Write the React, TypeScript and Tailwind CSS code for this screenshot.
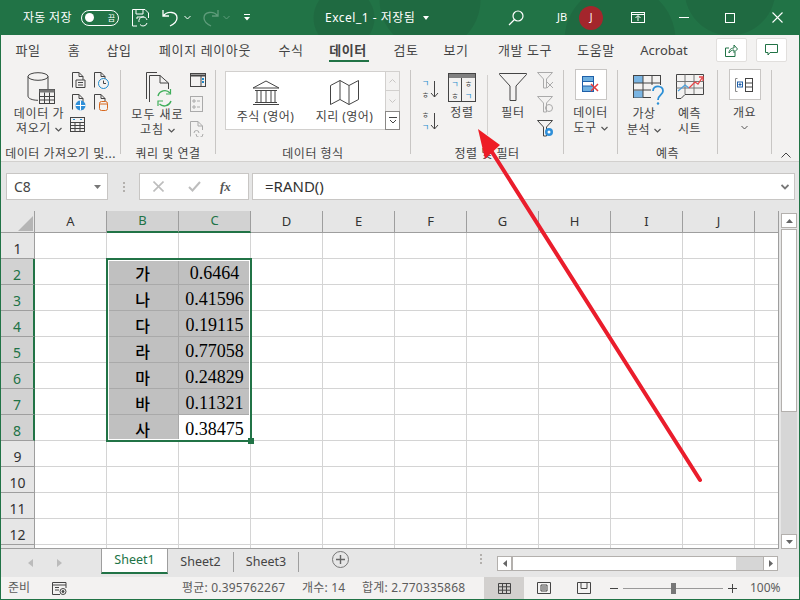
import React from "react";

const D = "#444444";
const BLUE = "#1e8bcd";

function Chevron({ c = "#555" }: { c?: string }) {
  return (
    <svg width="7" height="5" viewBox="0 0 7 5" className="inline-block ml-1 align-middle">
      <path d="M.5 1 3.5 4 6.5 1" fill="none" stroke={c} strokeWidth="1.2" />
    </svg>
  );
}

function Doc({ children, size = 17 }: { children?: React.ReactNode; size?: number }) {
  return (
    <svg width={size} height={size} viewBox="0 0 17 17" fill="none">
      <path d="M1.5 15.5V.5H8L12 4.5V15.5" stroke={D} />
      <path d="M8 .5V4.5H12" stroke={D} />
      {children}
    </svg>
  );
}

function SmallTable() {
  return (
    <svg width="15" height="15" viewBox="0 0 15 15" fill="none" stroke={D}>
      <rect x=".5" y=".5" width="14" height="14" />
      <path d="M.5 5.5H14.5M.5 8.5H14.5M.5 11.5H14.5M5 5.5V14.5M10 5.5V14.5" />
      <path d="M3 2.5H5M10 2.5H12" stroke={BLUE} />
    </svg>
  );
}

function DbIcon() {
  return (
    <svg width="28" height="33" viewBox="0 0 28 33" fill="none">
      <ellipse cx="11" cy="4.5" rx="10" ry="3.8" stroke={D} />
      <path d="M1 4.5V24C1 26.5 5 28.2 11 28.3M21 4.5V17" stroke={D} />
      <rect x="12.5" y="17.5" width="15" height="14" fill="#f3f2f1" stroke={D} />
      <rect x="12.5" y="17.5" width="15" height="3" fill="#777" />
      <path d="M12.5 24.5H27.5M12.5 28H27.5M17.5 20.5V31.5M22.5 20.5V31.5" stroke={D} />
    </svg>
  );
}

function RefreshAll() {
  return (
    <svg width="26" height="36" viewBox="0 0 26 36" fill="none">
      <path d="M.5 27V.5H11" stroke={D} />
      <path d="M3.5 30V3.5H14L22.5 11V17" stroke={D} />
      <path d="M14 3.5V11H22.5" stroke={D} />
      <path d="M12 24A7 7 0 0 1 24 21M25 29A7 7 0 0 1 13.500 32" stroke="#3fae5a" strokeWidth="1.4" />
      <path d="M24.500 17V22H20M12 34V29H17" stroke="#3fae5a" strokeWidth="1.2" />
    </svg>
  );
}

function Bank() {
  return (
    <svg width="28" height="25" viewBox="0 0 28 25" fill="none" stroke={D}>
      <path d="M1 8 14 1 27 8Z" fill="#fff" />
      <path d="M3 10.500H25M3 22.500H25M1 24.500H27" />
      <path d="M5 11V22M9 11V22M14 11V22M19 11V22M23 11V22" />
    </svg>
  );
}

function MapIcon() {
  return (
    <svg width="29" height="25" viewBox="0 0 29 25" fill="none" stroke={D}>
      <path d="M.5 5.500 10 .5 19 5.500 28.500 .5V19.500L19 24.500 10 19.500.5 24.500Z" />
      <path d="M10 .5V19.500M19 5.500V24.500" />
    </svg>
  );
}

function SortAZ({ flip }: { flip?: boolean }) {
  const top = flip ? "ㅎ" : "ㄱ";
  const bot = flip ? "ㄱ" : "ㅎ";
  return (
    <div className="flex items-center h-[24px] w-[19px]">
      <div className="flex flex-col w-[9px] text-[8px] leading-[12px] text-center">
        <span className={flip ? "text-[#444]" : "text-[#1e8bcd]"}>{top}</span>
        <span className={flip ? "text-[#1e8bcd]" : "text-[#444]"}>{bot}</span>
      </div>
      <svg width="9" height="17" viewBox="0 0 9 17" fill="none" stroke={D}>
        <path d="M4.500 0V16M1 12 4.500 16 8 12" />
      </svg>
    </div>
  );
}

function SortBig() {
  return (
    <div className="w-[28px] h-[29px] border border-[#444] flex flex-col">
      <div className="h-[4px] bg-[#808080] shrink-0" />
      <div className="flex flex-1">
        <div className="w-1/2 border-r border-[#444] flex flex-col text-[8px] leading-[11.500px] text-center">
          <span className="text-[#1e8bcd]">ㄱ</span>
          <span>ㅎ</span>
        </div>
        <div className="w-1/2 flex flex-col text-[8px] leading-[11.500px] text-center">
          <span>ㅎ</span>
          <span className="text-[#1e8bcd]">ㄱ</span>
        </div>
      </div>
    </div>
  );
}

function Funnel({ c = D, s = 28 }: { c?: string; s?: number }) {
  return (
    <svg width={s} height={s} viewBox="0 0 28 28" fill="none" stroke={c} strokeWidth={s > 20 ? 1 : 1.4}>
      <path d="M.5 .5H27.500V1.500L17 13V27.500H11V13L.5 1.500Z" />
    </svg>
  );
}

function Forecast() {
  return (
    <svg width="28" height="26" viewBox="0 0 28 26" fill="none">
      <path d="M.5 .5H27.500V20.500H9L5 24.500H.5Z" stroke={D} />
      <path d="M.5 7.500H27.500M.5 14H27.500M9 .5V20M18 .5V20" stroke="#777" />
      <path d="M2 17 9 11 13 14" stroke="#4aa0dc" strokeWidth="1.3" />
      <path d="M13 14 19 8 22 10 26 4M23 3H27V7" stroke="#e8474a" strokeWidth="1.3" />
    </svg>
  );
}

function WhatIf() {
  return (
    <svg width="32" height="30" viewBox="0 0 32 30" fill="none">
      <rect x=".5" y=".5" width="27" height="22" stroke={D} />
      <rect x="1" y="1" width="9" height="7" fill="#7ab5e3" />
      <rect x="1" y="15.500" width="9" height="7" fill="#7ab5e3" />
      <path d="M.5 8H27.500M.5 15H27.500M10 .5V22.500M19 .5V22.500" stroke={D} />
      <rect x="18" y="10" width="14" height="20" fill="#f3f2f1" />
      <path d="M20 16C20 9.500 30 10 30 16 30 20 25 20 25 25" stroke="#2b8fd6" strokeWidth="1.8" />
      <circle cx="25" cy="28.500" r="1.200" fill="#2b8fd6" />
    </svg>
  );
}

function Sep() {
  return <div className="w-px bg-[#c8c6c4] self-stretch my-[7px] shrink-0" />;
}

function Group({ w, label, children }: { w: string; label: string; children: React.ReactNode }) {
  return (
    <div className={`${w} shrink-0 flex flex-col`}>
      <div className="h-[80px] flex overflow-hidden">{children}</div>
      <div className="h-[18px] text-[12px] leading-[18px] pt-[2px] text-center whitespace-nowrap text-[#444] tracking-[0.5px]">{label}</div>
    </div>
  );
}

const COLS = ["A", "B", "C", "D", "E", "F", "G", "H", "I", "J", ""];
const RIGHT: Record<number, [string, string]> = {
  2: ["가", "0.6464"],
  3: ["나", "0.41596"],
  4: ["다", "0.19115"],
  5: ["라", "0.77058"],
  6: ["마", "0.24829"],
  7: ["바", "0.11321"],
  8: ["사", "0.38475"],
};

const TABS: [string, string][] = [
  ["파일", "w-[46px]"],
  ["홈", "w-[46px]"],
  ["삽입", "w-[44px]"],
  ["페이지 레이아웃", "w-[128px]"],
  ["수식", "w-[44px]"],
  ["데이터", "w-[70px]"],
  ["검토", "w-[46px]"],
  ["보기", "w-[54px]"],
  ["개발 도구", "w-[84px]"],
  ["도움말", "w-[58px]"],
  ["Acrobat", "w-[78px]"],
];

export default function App() {
  return (
    <div className="relative w-[800px] h-[600px] overflow-hidden bg-[#e6e6e6] flex flex-col border-x border-b border-[#217346] text-[#444] [font-family:'Noto_Sans','Noto_Sans_CJK_KR',sans-serif]">
      {/* title bar */}
      <div className="h-[35px] shrink-0 bg-[#217346] bg-[radial-gradient(circle_at_344px_18px,#1f6a41_30px,transparent_31px),radial-gradient(circle_at_430px_0px,#1f6a41_50px,transparent_51px),radial-gradient(circle_at_620px_40px,#1f6a41_55px,transparent_56px),radial-gradient(circle_at_730px_-10px,#1f6a41_45px,transparent_46px)] text-white flex items-center text-[12px] -mx-px relative">
        <span className="ml-[23px] w-[53px] whitespace-nowrap tracking-[0.3px]">자동 저장</span>
        <div className="ml-[5px] w-[38px] h-[16px] rounded-full border border-white flex items-center justify-between px-[3px]">
          <span className="w-[9px] h-[9px] rounded-full bg-white" />
          <span className="text-[8px] leading-[11px]">끔</span>
        </div>
        <svg className="ml-[13px]" width="17" height="18" viewBox="0 0 17 18" fill="none" stroke="#fff">
          <path d="M5 17H.5V.5H13L16.500 4V9M4 .5V5H11V.5M5 10V8H12" />
          <path d="M7 13A4 4 0 0 1 15 11M15 14A4 4 0 0 1 8 15.500" />
        </svg>
        <svg className="ml-[13px]" width="18" height="18" viewBox="0 0 18 18" fill="none" stroke="#fff" strokeWidth="1.3">
          <path d="M1 1V7H7M1 7C6 1 15 3 15 9 15 12 12 15 8 17" />
        </svg>
        <svg className="ml-[4px]" width="7" height="5" viewBox="0 0 7 5" fill="none" stroke="#fff"><path d="M.5 1 3.500 4 6.500 1" /></svg>
        <svg className="ml-[10px]" width="18" height="18" viewBox="0 0 18 18" fill="none" stroke="#5f9c7b" strokeWidth="1.3">
          <path d="M17 1V7H11M17 7C12 1 3 3 3 9 3 12 6 15 10 17" />
        </svg>
        <svg className="ml-[4px]" width="7" height="5" viewBox="0 0 7 5" fill="none" stroke="#5f9c7b"><path d="M.5 1 3.500 4 6.500 1" /></svg>
        <svg className="ml-[13px]" width="8" height="7" viewBox="0 0 8 7" fill="#fff"><path d="M1 0H7V1H1ZM1 3H7L4 6.500Z" /></svg>
        <span className="ml-[74px] w-[98px] whitespace-nowrap text-[12px] tracking-[0.5px]">Excel_1 - 저장됨</span>
        <svg width="6" height="4" viewBox="0 0 6 4" fill="#fff"><path d="M0 0H6L3 4Z" /></svg>
        <svg className="ml-[79px]" width="16" height="16" viewBox="0 0 16 16" fill="none" stroke="#fff" strokeWidth="1.2">
          <circle cx="10" cy="6" r="5" />
          <path d="M6.500 9.500 1 15" />
        </svg>
        <span className="ml-[33px] w-[14px] text-[11px]">JB</span>
        <div className="ml-[8px] w-[24px] h-[24px] rounded-full bg-[#a4262c] flex items-center justify-center text-[10px]">J</div>
        <svg className="ml-[28px]" width="14" height="11" viewBox="0 0 14 11" fill="none" stroke="#fff">
          <rect x=".5" y=".5" width="13" height="10" />
          <path d="M.5 2.500H13.500M7 9V4M4.500 6 7 3.500 9.500 6" />
        </svg>
        <span className="ml-[34px] w-[10px] h-px bg-white" />
        <span className="ml-[36px] w-[10px] h-[10px] border border-white" />
        <svg className="ml-[37px]" width="11" height="11" viewBox="0 0 11 11" stroke="#fff" strokeWidth="1.1"><path d="M.5.5 10.500 10.500M10.500.5.5 10.500" /></svg>
      </div>

      {/* tabs */}
      <div className="h-[28px] shrink-0 bg-[#f3f2f1] flex pl-[4px] text-[13px] items-stretch">
        {TABS.map(([t, w]) => (
          <div key={t} className={`${w} relative shrink-0 flex items-center justify-center whitespace-nowrap pt-[3px] ${t === "Acrobat" ? "" : "tracking-[0.6px]"} ${t === "데이터" ? "font-bold" : ""}`}>
            {t}
            {t === "데이터" && <span className="absolute left-[16px] right-[14px] bottom-[1px] h-[2px] bg-[#217346]" />}
          </div>
        ))}
        <div className="ml-[13px] mt-[3px] w-[31px] h-[24px] bg-white border border-[#e1dfdd] rounded-[2px] flex items-center justify-center">
          <svg width="13" height="13" viewBox="0 0 13 13" fill="none" stroke="#217346">
            <path d="M10 8V12.500H.5V4H4M4 9C4 5 7 4 9 4V1L12.500 5 9 8.500V6C7 6 5 7 4 9Z" />
          </svg>
        </div>
        <div className="ml-[9px] mt-[3px] w-[31px] h-[24px] bg-white border border-[#e1dfdd] rounded-[2px] flex items-center justify-center">
          <svg width="13" height="12" viewBox="0 0 13 12" fill="none" stroke="#217346">
            <path d="M.5.5H12.500V8.500H5L3 11V8.500H.5Z" />
          </svg>
        </div>
      </div>

      {/* ribbon */}
      <div className="h-[99px] shrink-0 bg-[#f3f2f1] flex border-b border-[#d2d0ce] text-[12px]">
        <Group w="w-[119px]" label="데이터 가져오기 및...">
          <div className="w-[70px] flex flex-col items-center pt-[9px] pl-[6px]">
            <div className="ml-[3px]"><DbIcon /></div>
            <div className="mt-[1px] leading-[15px] text-center tracking-[0.6px] whitespace-nowrap">
              데이터 가<br />져오기<Chevron />
            </div>
          </div>
          <div className="flex flex-col pt-[9px]">
            <div className="grid grid-cols-[22px_22px] gap-y-[5px]">
              <Doc><path d="M5 8H14V15.500H5Z" fill="#f3f2f1" stroke={D} /><path d="M7 10.500H12M7 13H12" stroke={D} /></Doc>
              <Doc><circle cx="10.500" cy="11.500" r="5" fill="#f3f2f1" stroke={BLUE} /><path d="M10.500 8.500V11.500H13" stroke={D} /></Doc>
              <Doc><circle cx="9.500" cy="11.500" r="5" fill="#2f8fd8" /><path d="M4.500 11.500H14.500M9.500 6.500V16.500" stroke="#fff" /></Doc>
              <Doc><rect x="6.500" y="7.500" width="8" height="9" rx="2" fill="#f3f2f1" stroke="#d8691f" /><path d="M6.500 10H14.500" stroke="#d8691f" /></Doc>
            </div>
            <div className="mt-[6px] -ml-[1px]"><SmallTable /></div>
          </div>
        </Group>
        <Sep />
        <Group w="w-[94px]" label="쿼리 및 연결">
          <div className="w-[69px] flex flex-col items-center pt-[9px] pl-[4px]">
            <div className="ml-[2px]"><RefreshAll /></div>
            <div className="-mt-[1px] leading-[15px] text-center tracking-[1px] whitespace-nowrap">
              모두 새로<br />고침<Chevron />
            </div>
          </div>
          <div className="flex flex-col gap-[9px] pt-[10px]">
            <svg width="16" height="14" viewBox="0 0 16 14" fill="none">
              <rect x=".5" y=".5" width="15" height="13" stroke={D} />
              <path d="M.5 2.500H15.500" stroke={D} strokeWidth="2" />
              <path d="M11 3V13" stroke={D} />
              <path d="M13 5V11" stroke={BLUE} strokeWidth="2" strokeDasharray="2 1" />
            </svg>
            <svg width="13" height="16" viewBox="0 0 13 16" fill="none" stroke="#aaa">
              <rect x=".5" y=".5" width="12" height="15" />
              <path d="M3 4H5V6H3ZM3 10H5V12H3ZM7 5H10M7 11H10" />
            </svg>
            <svg width="14" height="16" viewBox="0 0 14 16" fill="none" stroke="#aaa">
              <path d="M.5 15.500V.5H8L12.500 5V9M8 .5V5H12.500" />
              <path d="M4 12A2.500 2.500 0 0 1 9 12M6 13A2.500 2.500 0 0 0 13 13" />
            </svg>
          </div>
        </Group>
        <Sep />
        <Group w="w-[194px]" label="데이터 형식">
          <div className="mt-[8px] ml-[9px] h-[59px] w-[160px] bg-white border border-[#d2d0ce] border-r-0 flex text-[12px]">
            <div className="w-[79px] flex flex-col items-center pt-[8px]">
              <Bank />
              <span className="mt-[3px] whitespace-nowrap tracking-[0.4px]">주식 (영어)</span>
            </div>
            <div className="w-[79px] flex flex-col items-center pt-[8px]">
              <MapIcon />
              <span className="mt-[3px] whitespace-nowrap tracking-[0.4px]">지리 (영어)</span>
            </div>
          </div>
          <div className="mt-[8px] w-[15px] h-[59px] flex flex-col">
            <div className="h-[20px] border border-[#d2d0ce] bg-[#f3f2f1] flex items-center justify-center"><svg width="7" height="4" viewBox="0 0 7 4" fill="none" stroke="#c8c6c4"><path d="M.5 3.500 3.500.5 6.500 3.500" /></svg></div>
            <div className="h-[20px] border-x border-[#d2d0ce] bg-[#f3f2f1] flex items-center justify-center"><svg width="7" height="4" viewBox="0 0 7 4" fill="none" stroke="#c8c6c4"><path d="M.5.5 3.500 3.500 6.500 .5" /></svg></div>
            <div className="h-[19px] border border-[#8a8886] bg-white flex items-center justify-center"><svg width="8" height="7" viewBox="0 0 8 7" fill="none" stroke="#444"><path d="M0 .5H8M1 3 4 6 7 3" /></svg></div>
          </div>
        </Group>
        <Sep />
        <Group w="w-[152px]" label="정렬 및 필터">
          <div className="w-[27px] flex flex-col pl-[10px] pt-[14px] gap-[8px]">
            <SortAZ />
            <SortAZ flip />
          </div>
          <div className="w-[36px] flex flex-col items-center pt-[10px] ml-[6px]">
            <SortBig />
            <span className="mt-[2px] tracking-[0.6px]">정렬</span>
          </div>
          <div className="w-px bg-[#d2d0ce] h-[60px] mt-[12px] ml-[7px]" />
          <div className="w-[50px] flex flex-col items-center pt-[10px]">
            <Funnel />
            <span className="mt-[3px] tracking-[0.6px]">필터</span>
          </div>
          <div className="flex flex-col gap-[7px] pt-[9px] -ml-[1px]">
            <svg width="17" height="17" viewBox="0 0 17 17" fill="none" stroke="#aaa"><path d="M.5.5H15.500L9.500 7V16H6.500V7Z" /><path d="M10 10 16 16M16 10 10 16" /></svg>
            <svg width="17" height="17" viewBox="0 0 17 17" fill="none" stroke="#aaa"><path d="M.5.5H15.500L9.500 7V16H6.500V7Z" /><circle cx="12" cy="12" r="3.500" /></svg>
            <svg width="17" height="17" viewBox="0 0 17 17" fill="none"><path d="M.5.5H15.500L9.500 7V16H6.500V7Z" stroke={D} /><circle cx="12" cy="12" r="4" fill="#2f8fd8" /><circle cx="12" cy="12" r="1.500" fill="#fff" /></svg>
          </div>
        </Group>
        <Sep />
        <Group w="w-[53px]" label="">
          <div className="w-full flex flex-col items-center pt-[6px]">
            <div className="w-[32px] h-[31px] bg-white border border-[#c8c6c4] flex items-center justify-center">
              <svg width="18" height="17" viewBox="0 0 18 17" fill="none">
                <rect x=".5" y=".5" width="11" height="15" stroke="#1e5fa8" />
                <rect x="1" y="1" width="10" height="4" fill="#6fb0e0" />
                <rect x="1" y="10" width="10" height="5" fill="#6fb0e0" />
                <path d="M.5 5.500H11.500M.5 10H11.500" stroke="#1e5fa8" />
                <path d="M9 8 16 15M16 8 9 15" stroke="#e53c3c" strokeWidth="1.500" />
              </svg>
            </div>
            <div className="mt-[5px] leading-[15px] text-center tracking-[0.5px] whitespace-nowrap">데이터<br />도구<Chevron /></div>
          </div>
        </Group>
        <Sep />
        <Group w="w-[99px]" label="예측">
          <div className="w-[50px] flex flex-col items-center pt-[12px] pl-[2px]">
            <div className="ml-[10px]"><WhatIf /></div>
            <div className="mt-[1px] leading-[16px] text-center tracking-[0.5px] whitespace-nowrap">가상<br />분석<Chevron /></div>
          </div>
          <div className="flex-1 flex flex-col items-center pt-[11px] pr-[6px]">
            <Forecast />
            <div className="mt-[6px] leading-[15px] text-center tracking-[0.5px] whitespace-nowrap">예측<br />시트</div>
          </div>
        </Group>
        <Sep />
        <Group w="w-[53px]" label="">
          <div className="w-full flex flex-col items-center pt-[6px]">
            <div className="w-[32px] h-[31px] bg-white border border-[#c8c6c4] flex items-center justify-center">
              <svg width="19" height="14" viewBox="0 0 19 14" fill="none" stroke={D}>
                <path d="M2.500.5H.5V13.500H2.500" stroke="#888" />
                <rect x="2.500" y="4" width="5" height="5" stroke="#1e5fa8" />
                <path d="M3.500 6.500H6.500M5 5V8" stroke="#1e5fa8" />
                <rect x="10.500" y=".5" width="7" height="13" />
                <path d="M10.500 5H17.500M10.500 9H17.500" />
              </svg>
            </div>
            <span className="mt-[5px] leading-[15px] tracking-[0.5px]">개요</span>
            <svg className="mt-[5px]" width="7" height="5" viewBox="0 0 7 5" fill="none" stroke="#555"><path d="M.5 1 3.500 4 6.500 1" /></svg>
          </div>
        </Group>
        <Sep />
        <div className="flex-1 flex items-end justify-center pb-[3px]">
          <svg width="10" height="6" viewBox="0 0 10 6" fill="none" stroke="#444"><path d="M.5 5.500 5 1 9.500 5.500" /></svg>
        </div>
      </div>

      {/* formula bar */}
      <div className="h-[49px] shrink-0 flex items-start pt-[11px] pl-[5px] bg-[#e6e6e6] text-[14px]">
        <div className="w-[102px] h-[27px] bg-white border border-[#c8c6c4] flex items-center justify-between pl-[7px] pr-[6px]">
          <span>C8</span>
          <svg width="7" height="4" viewBox="0 0 7 4" fill="#777"><path d="M0 0H7L3.500 4Z" /></svg>
        </div>
        <div className="w-[31px] h-[27px] flex flex-col items-center justify-center gap-[2px]">
          <span className="w-[2px] h-[2px] bg-[#b3b0ad]" /><span className="w-[2px] h-[2px] bg-[#b3b0ad]" /><span className="w-[2px] h-[2px] bg-[#b3b0ad]" />
        </div>
        <div className="w-[110px] h-[27px] bg-white border border-[#c8c6c4] flex items-center pl-[13px]">
          <svg width="11" height="11" viewBox="0 0 11 11" stroke="#bdbdbd" strokeWidth="1.600"><path d="M.5.5 10.500 10.500M10.500.5.5 10.500" /></svg>
          <svg className="ml-[24px]" width="13" height="11" viewBox="0 0 13 11" fill="none" stroke="#bdbdbd" strokeWidth="2"><path d="M1 6 4.500 9.500 12 1" /></svg>
          <span className="ml-[19px] [font-family:'Liberation_Serif',serif] italic font-bold text-[13px] text-[#555]">fx</span>
        </div>
        <div className="ml-[3px] w-[543px] h-[27px] bg-white border border-[#c8c6c4] flex items-center justify-between pl-[12px] pr-[5px] text-[15px] text-[#333]">
          <span>=RAND()</span>
          <svg width="8" height="6" viewBox="0 0 8 6" fill="none" stroke="#777" strokeWidth="1.800"><path d="M.5 1 4 4.500 7.500 1" /></svg>
        </div>
      </div>

      {/* grid + scrollbar */}
      <div className="h-[338px] shrink-0 flex relative">
        <div className="w-[778px] shrink-0 overflow-hidden flex flex-col border-r border-b border-[#9e9e9e]">
          <div className="h-[22px] flex shrink-0 text-[13px] text-[#333]">
            <div className="w-[34px] shrink-0 flex items-end justify-end pr-[1px] pb-[1px] border-r border-b border-[#9e9e9e]">
              <svg width="15" height="15" viewBox="0 0 15 15"><path d="M15 0V15H0Z" fill="#b5b5b5" /></svg>
            </div>
            {COLS.map((c, i) => {
              const sel = c === "B" || c === "C";
              return (
                <div key={i} className={`w-[72px] shrink-0 flex items-center justify-center border-r ${sel ? "bg-[#d2d2d2] text-[#217346] border-b-2 border-b-[#217346] border-r-[#9e9e9e]" : "border-b border-b-[#9e9e9e] border-r-[#9e9e9e]"}`}>
                  {c}
                </div>
              );
            })}
          </div>
          {Array.from({ length: 13 }, (_, k) => k + 1).map((r) => {
            const data = RIGHT[r];
            return (
              <div key={r} className="h-[26px] flex shrink-0 bg-white">
                <div className={`w-[34px] shrink-0 flex items-center justify-center pt-[5px] text-[14px] border-b border-b-[#9e9e9e] ${data ? "bg-[#d2d2d2] text-[#217346] border-r-2 border-r-[#217346]" : "bg-[#e6e6e6] text-[#333] border-r border-r-[#9e9e9e]"}`}>
                  {r === 13 ? "" : r}
                </div>
                {COLS.map((_, i) => {
                  const shaded = data && (i === 1 || (i === 2 && r !== 8));
                  const text = data && i === 1 ? data[0] : data && i === 2 ? data[1] : "";
                  return (
                    <div key={i} className={`w-[72px] shrink-0 border-r border-b flex items-center justify-center text-black pt-[3px] ${shaded ? "bg-[#c0c0c0] border-[#a9a9a9]" : "border-[#d4d4d4]"} ${i === 1 ? "text-[16px] font-medium [font-family:'Noto_Sans_CJK_KR',serif]" : "text-[18px] [font-family:'Liberation_Serif','Noto_Sans_CJK_KR',serif]"}`}>
                      {text}
                    </div>
                  );
                })}
              </div>
            );
          })}
        </div>
        <div className="ml-[2px] mt-[2px] w-[16px] flex flex-col h-[336px]">
          <div className="h-[15px] bg-white border border-[#b3b0ad] flex items-center justify-center shrink-0">
            <svg width="7" height="4" viewBox="0 0 7 4" fill="#666"><path d="M0 4H7L3.500 0Z" /></svg>
          </div>
          <div className="h-[183px] mt-px bg-white border border-[#b3b0ad] shrink-0" />
          <div className="flex-1 bg-[#d6d6d6]" />
          <div className="h-[15px] bg-white border border-[#b3b0ad] flex items-center justify-center shrink-0">
            <svg width="7" height="4" viewBox="0 0 7 4" fill="#666"><path d="M0 0H7L3.500 4Z" /></svg>
          </div>
        </div>
        {/* selection outline */}
        <div className="absolute left-[105px] top-[47px] w-[146px] h-[184px] border-2 border-[#217346]">
          <div className="w-full h-full border border-white" />
          <span className="absolute -right-[4px] -bottom-[4px] w-[6px] h-[6px] bg-[#217346] border-0" />
        </div>
      </div>

      {/* sheet tabs */}
      <div className="h-[28px] shrink-0 flex bg-[#e6e6e6] text-[12.500px]">
        <div className="w-[100px] shrink-0 flex items-center pl-[27px] gap-[24px]">
          <svg width="5" height="8" viewBox="0 0 5 8" fill="#bbb"><path d="M5 0V8L0 4Z" /></svg>
          <svg width="5" height="8" viewBox="0 0 5 8" fill="#bbb"><path d="M0 0V8L5 4Z" /></svg>
        </div>
        <div className="w-[67px] shrink-0 h-[25px] bg-white border-x border-[#9e9e9e] border-b-2 border-b-[#217346] flex items-center justify-center text-[#217346]">Sheet1</div>
        <div className="flex-1 flex items-start">
          <div className="w-[66px] h-[20px] mt-[3px] border-r border-[#9e9e9e] flex items-center justify-center">Sheet2</div>
          <div className="w-[65px] h-[20px] mt-[3px] border-r border-[#9e9e9e] flex items-center justify-center">Sheet3</div>
          <div className="ml-[33px] mt-[2px] w-[17px] h-[17px] rounded-full border border-[#777] flex items-center justify-center">
            <svg width="9" height="9" viewBox="0 0 9 9" stroke="#666" strokeWidth="1.400"><path d="M4.500 0V9M0 4.500H9" /></svg>
          </div>
          <div className="ml-[131px] mt-[5px] flex flex-col gap-[2px] w-[2px]">
            <span className="w-[2px] h-[2px] bg-[#b3b0ad]" /><span className="w-[2px] h-[2px] bg-[#b3b0ad]" /><span className="w-[2px] h-[2px] bg-[#b3b0ad]" />
          </div>
          <div className="ml-[15px] mt-[7px] w-[281px] h-[15px] flex border border-[#b3b0ad] bg-white">
            <div className="w-[14px] border-r border-[#b3b0ad] flex items-center justify-center">
              <svg width="4" height="7" viewBox="0 0 4 7" fill="#666"><path d="M4 0V7L0 3.500Z" /></svg>
            </div>
            <div className="w-[224px] border-l border-[#b3b0ad]" />
            <div className="flex-1 bg-[#d6d6d6]" />
            <div className="w-[14px] border-l border-[#b3b0ad] flex items-center justify-center">
              <svg width="4" height="7" viewBox="0 0 4 7" fill="#666"><path d="M0 0V7L4 3.500Z" /></svg>
            </div>
          </div>
        </div>
      </div>

      {/* status bar */}
      <div className="flex-1 flex items-stretch bg-[#f3f2f1] text-[12px] text-[#5c5c5c] whitespace-nowrap">
        <span className="ml-[7px] w-[44px] self-center">준비</span>
        <svg className="self-center" width="15" height="13" viewBox="0 0 15 13" fill="none" stroke={D}>
          <path d="M8 12.500H.5V.5H14V6M.5 3H14M3 5.500H7M3 8H7" />
          <circle cx="11" cy="9.500" r="3" />
          <circle cx="11" cy="9.500" r="1" fill={D} />
        </svg>
        <span className="ml-[115px] w-[120px] self-center tracking-[0.2px]">평균: 0.395762267</span>
        <span className="w-[60px] self-center tracking-[0.2px]">개수: 14</span>
        <span className="w-[122px] self-center tracking-[0.2px]">합계: 2.770335868</span>
        <div className="w-[40px] bg-[#d2d0ce] flex items-center justify-center">
          <svg width="13" height="11" viewBox="0 0 13 11" fill="none" stroke={D}><path d="M.5.5H12.500V10.500H.5ZM.5 3.800H12.500M.5 7.200H12.500M4.500.5V10.500M8.500.5V10.500" /></svg>
        </div>
        <div className="w-[40px] flex items-center justify-center">
          <svg width="14" height="12" viewBox="0 0 14 12" fill="none" stroke={D}><path d="M.5.5H13.500V11.500H.5ZM4 3H10V9H4ZM5 5H9M5 7H9" /></svg>
        </div>
        <div className="w-[40px] flex items-center justify-center">
          <svg width="14" height="12" viewBox="0 0 14 12" fill="none" stroke={D}><path d="M.5.5H13.500V11.500H.5ZM4 .5V6.500H10V.5" /></svg>
        </div>
        <div className="flex items-center">
          <span className="ml-[6px] w-[8px] h-px bg-[#444]" />
          <div className="ml-[5px] w-[100px] h-px bg-[#999] flex items-center justify-center">
            <span className="w-[5px] h-[11px] bg-[#777]" />
          </div>
          <svg className="ml-[5px]" width="9" height="9" viewBox="0 0 9 9" stroke="#444"><path d="M4.500 0V9M0 4.500H9" /></svg>
          <span className="ml-[13px]">100%</span>
        </div>
      </div>

      {/* red arrow annotation */}
      <svg className="absolute left-[-1px] top-0 pointer-events-none" width="800" height="600" viewBox="0 0 800 600" fill="none">
        <path d="M700 480 492 152" stroke="#ea1d2c" strokeWidth="4" strokeLinecap="round" />
        <path d="M478 129 500 145 485 159Z" fill="#ee1c25" />
      </svg>
    </div>
  );
}
